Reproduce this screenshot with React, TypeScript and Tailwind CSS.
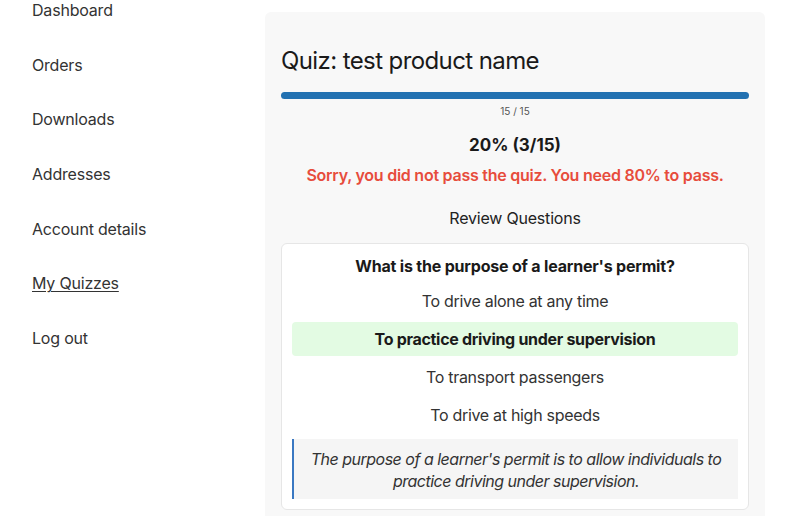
const navItems = ['Dashboard', 'Orders', 'Downloads', 'Addresses', 'Account details', 'My Quizzes', 'Log out'];

const options = [
  { text: 'To drive alone at any time', correct: false },
  { text: 'To practice driving under supervision', correct: true },
  { text: 'To transport passengers', correct: false },
  { text: 'To drive at high speeds', correct: false },
];

export default function App() {
  return (
    <div className="flex h-[516px] w-[800px] overflow-hidden bg-white text-[#333] font-['Inter',sans-serif]">
      <nav className="w-[265px] shrink-0 pl-8">
        <ul className="-mt-[2px] flex flex-col gap-[30.7px]">
          {navItems.map((item) => (
            <li key={item} className="text-[16px] leading-6 tracking-[-0.2px]">
              <a href="#" className={item === 'My Quizzes' ? 'underline underline-offset-2' : ''}>
                {item}
              </a>
            </li>
          ))}
        </ul>
      </nav>

      <main className="mt-3 w-[500px] shrink-0 self-start rounded-md bg-[#f8f8f8] px-4 pt-[33px] pb-6">
        <h2 className="text-[24px] leading-8 tracking-[-0.6px] text-[#1a1a1a]">Quiz: test product name</h2>

        <div className="mt-[15px] h-[7px] w-full rounded-full bg-[#2271b1]" />
        <p className="mt-[5px] text-center text-[10px] leading-[14px] text-[#555]">15 / 15</p>

        <p className="mt-[15px] text-center text-[17px] font-bold leading-6 text-[#1a1a1a]">20% (3/15)</p>
        <p className="mt-[6px] text-center text-[16px] font-semibold leading-6 tracking-[-0.25px] text-[#e74c3c]">
          Sorry, you did not pass the quiz. You need 80% to pass.
        </p>

        <p className="mt-[19px] text-center text-[16px] leading-6 tracking-[-0.2px] text-[#222]">Review Questions</p>

        <div className="mt-[13px] rounded-md border border-[#e6e6e6] bg-white p-[10px]">
          <p className="text-center text-[16px] font-bold leading-6 tracking-[-0.2px] text-[#1a1a1a]">
            What is the purpose of a learner's permit?
          </p>
          <div className="mt-[6px] flex flex-col gap-1">
            {options.map((o) => (
              <div
                key={o.text}
                className={`flex h-[34px] items-center justify-center rounded-sm text-[16px] tracking-[-0.3px] ${
                  o.correct ? 'bg-[#e3fbe3] font-bold text-[#1a1a1a]' : 'text-[#333]'
                }`}
              >
                {o.text}
              </div>
            ))}
          </div>
          <div className="mt-[7px] border-l-2 border-[#3a78c2] bg-[#f5f5f5] px-[10px] pt-[9px] pb-[7px] text-center text-[16px] italic leading-[22px] tracking-[-0.5px] text-[#333]">
            The purpose of a learner's permit is to allow individuals to practice driving under supervision.
          </div>
        </div>
      </main>
    </div>
  );
}
